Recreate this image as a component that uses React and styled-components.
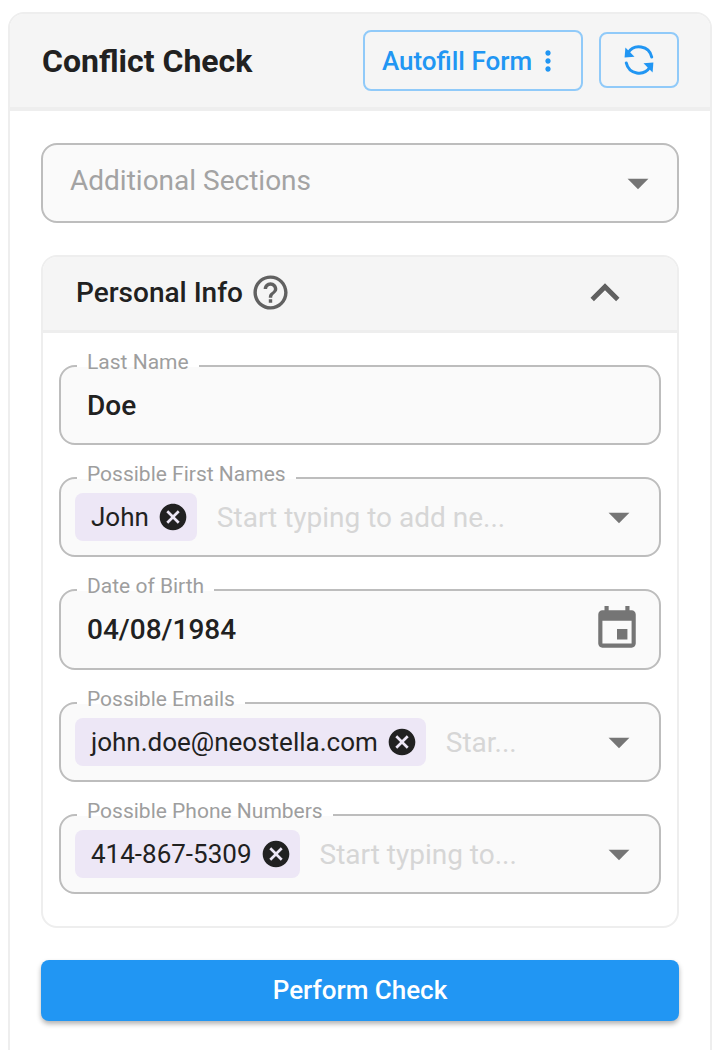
import styled, { createGlobalStyle } from 'styled-components';

const GlobalStyle = createGlobalStyle`
  html, body {
    margin: 0;
    height: 1050px;
    overflow: hidden;
    background: #ffffff;
  }
  body {
    font-family: Roboto, "Liberation Sans", sans-serif;
    color: #212121;
  }
`;

const ICONS = {
  cancel: 'M12 2C6.47 2 2 6.47 2 12s4.47 10 10 10 10-4.47 10-10S17.53 2 12 2zm5 13.59L15.59 17 12 13.41 8.41 17 7 15.59 10.59 12 7 8.41 8.41 7 12 10.59 15.59 7 17 8.41 13.41 12 17 15.59z',
  calendar: 'M17 12h-5v5h5v-5zM16 1v2H8V1H6v2H5c-1.11 0-1.99.9-1.99 2L3 19c0 1.1.89 2 2 2h14c1.1 0 2-.9 2-2V5c0-1.1-.9-2-2-2h-1V1h-2zm3 18H5V8h14v11z',
  help: 'M11 18h2v-2h-2v2zm1-16C6.48 2 2 6.48 2 12s4.48 10 10 10 10-4.48 10-10S17.52 2 12 2zm0 18c-4.41 0-8-3.59-8-8s3.59-8 8-8 8 3.59 8 8-3.59 8-8 8zm0-14c-2.21 0-4 1.79-4 4h2c0-1.1.9-2 2-2s2 .9 2 2c0 2-3 1.75-3 5h2c0-2.25 3-2.5 3-5 0-2.21-1.79-4-4-4z',
  expandLess: 'M12 8l-6 6 1.41 1.41L12 10.83l4.59 4.58L18 14z',
  arrowDown: 'M7 10l5 5 5-5z',
  moreVert: 'M12 8c1.1 0 2-.9 2-2s-.9-2-2-2-2 .9-2 2 .9 2 2 2zm0 2c-1.1 0-2 .9-2 2s.9 2 2 2 2-.9 2-2-.9-2-2-2zm0 6c-1.1 0-2 .9-2 2s.9 2 2 2 2-.9 2-2-.9-2-2-2z',
};

function Icon({ name, size, color }) {
  return (
    <IconSvg viewBox="0 0 24 24" $size={size} fill={color}>
      <path d={ICONS[name]} />
    </IconSvg>
  );
}

function RefreshIcon() {
  return (
    <IconSvg viewBox="0 0 32 32" $size={32} fill="none" stroke="#2196f3" strokeWidth="3">
      <path d="M5 9A13 13 0 0 1 28.7 13" strokeLinecap="round" />
      <path d="M3.3 19A13 13 0 0 0 27 23" strokeLinecap="round" />
      <path d="M2.4 3.5L1.6 13.4l9.9-.6z" fill="#2196f3" stroke="none" />
      <path d="M29.6 28.5l.8-9.9-9.9.6z" fill="#2196f3" stroke="none" />
    </IconSvg>
  );
}

function Field({ label, tall, children }) {
  return (
    <FieldBox $tall={tall}>
      <FieldLabel><span>{label}</span></FieldLabel>
      {children}
    </FieldBox>
  );
}

function TagField({ label, tag, placeholder }) {
  return (
    <Field label={label}>
      <TagRow>
        <Chip>
          {tag}
          <Icon name="cancel" size={32} color="#212121" />
        </Chip>
        <Placeholder>{placeholder}</Placeholder>
        <Icon name="arrowDown" size={50} color="#757575" />
      </TagRow>
    </Field>
  );
}

export default function App() {
  return (
    <>
      <GlobalStyle />
      <Panel>
        <PanelHeader>
          <Title>Conflict Check</Title>
          <AutofillButton>
            Autofill Form
            <Icon name="moreVert" size={32} color="#2196f3" />
          </AutofillButton>
          <RefreshButton>
            <RefreshIcon />
          </RefreshButton>
        </PanelHeader>

        <PanelBody>
          <SectionsSelect>
            <SelectText>Additional Sections</SelectText>
            <Icon name="arrowDown" size={50} color="#757575" />
          </SectionsSelect>

          <Section>
            <SectionHeader>
              <SectionTitle>Personal Info</SectionTitle>
              <Icon name="help" size={41} color="#616161" />
              <Collapse>
                <Icon name="expandLess" size={58} color="#616161" />
              </Collapse>
            </SectionHeader>
            <SectionBody>
              <Field label="Last Name">
                <ValueRow>Doe</ValueRow>
              </Field>
              <TagField label="Possible First Names" tag="John" placeholder="Start typing to add ne..." />
              <Field label="Date of Birth" tall>
                <ValueRow>
                  04/08/1984
                  <Icon name="calendar" size={50} color="#757575" />
                </ValueRow>
              </Field>
              <TagField label="Possible Emails" tag="john.doe@neostella.com" placeholder="Star..." />
              <TagField label="Possible Phone Numbers" tag="414-867-5309" placeholder="Start typing to..." />
            </SectionBody>
          </Section>

          <SubmitButton>Perform Check</SubmitButton>
        </PanelBody>
      </Panel>
    </>
  );
}

const IconSvg = styled.svg`
  display: block;
  flex: none;
  width: ${(props) => props.$size}px;
  height: ${(props) => props.$size}px;
`;

const Panel = styled.div`
  box-sizing: border-box;
  width: 704px;
  height: 1080px;
  margin: 12px 8px 0;
  border: 2px solid #eeeeee;
  border-radius: 16px;
  overflow: hidden;
`;

const PanelHeader = styled.header`
  box-sizing: border-box;
  height: 97px;
  display: flex;
  align-items: center;
  padding: 0 31px 0 32px;
  background: #f5f5f5;
  border-bottom: 4px solid #eeeeee;
`;

const Title = styled.h1`
  flex: 1;
  margin: 0;
  font-size: 32px;
  font-weight: 700;
  color: #212121;
`;

const OutlineButton = styled.button`
  box-sizing: border-box;
  display: flex;
  align-items: center;
  justify-content: center;
  padding: 0;
  background: transparent;
  border: 2px solid #90caf9;
  border-radius: 8px;
  color: #2196f3;
  font-family: inherit;
`;

const AutofillButton = styled(OutlineButton)`
  width: 220px;
  height: 61px;
  font-size: 26px;
  font-weight: 500;
`;

const RefreshButton = styled(OutlineButton)`
  width: 80px;
  height: 56px;
  margin: 0 0 2px 16px;
`;

const PanelBody = styled.div`
  padding: 32px 31px 0;
`;

const SectionsSelect = styled.div`
  box-sizing: border-box;
  height: 80px;
  display: flex;
  align-items: center;
  justify-content: space-between;
  padding: 0 14px 0 27px;
  background: #fafafa;
  border: 2px solid #bdbdbd;
  border-radius: 16px;
  font-size: 28px;
  color: #a3a3a3;
`;

const SelectText = styled.span`
  margin-bottom: 6px;
`;

const Section = styled.section`
  margin-top: 32px;
  border: 2px solid #eeeeee;
  border-radius: 16px;
  overflow: hidden;
`;

const SectionHeader = styled.div`
  box-sizing: border-box;
  height: 76px;
  display: flex;
  align-items: center;
  gap: 7px;
  padding: 0 43px 2px 33px;
  background: #f5f5f5;
  border-bottom: 3px solid #eeeeee;
`;

const SectionTitle = styled.h2`
  margin: 0;
  font-size: 28px;
  font-weight: 500;
  color: #212121;
`;

const Collapse = styled.div`
  margin-left: auto;
`;

const SectionBody = styled.div`
  display: flex;
  flex-direction: column;
  gap: 32px;
  padding: 32px 16px 32px;
`;

const FieldBox = styled.fieldset`
  box-sizing: border-box;
  height: ${(props) => (props.$tall ? '81px' : '80px')};
  min-width: 0;
  margin: 0;
  padding: 0 14px;
  background: #fafafa;
  border: 2px solid #bdbdbd;
  border-radius: 16px;
  background-clip: padding-box;
`;

const FieldLabel = styled.legend`
  height: 2px;
  margin-left: 2px;
  padding: 0 10px;
  font-size: 21px;
  line-height: 2px;
  color: #9e9e9e;

  span {
    position: relative;
    top: -4px;
  }
`;

const ValueRow = styled.div`
  height: 76px;
  display: flex;
  align-items: center;
  justify-content: space-between;
  padding: 0 3px 0 12px;
  font-size: 28px;
  font-weight: 500;
  color: #212121;
`;

const TagRow = styled.div`
  height: 76px;
  display: flex;
  align-items: center;
  padding-right: 1px;
`;

const Chip = styled.div`
  box-sizing: border-box;
  height: 48px;
  display: flex;
  align-items: center;
  gap: 8px;
  flex: none;
  padding: 0 8px 0 16px;
  background: #ede7f6;
  border-radius: 8px;
  font-size: 26px;
  color: #212121;
`;

const Placeholder = styled.span`
  flex: 1;
  min-width: 0;
  margin-left: 20px;
  font-size: 28px;
  color: #d6d6d6;
  white-space: nowrap;
`;

const SubmitButton = styled.button`
  width: 100%;
  height: 61px;
  margin-top: 32px;
  padding: 0 0 2px;
  background: #2196f3;
  border: none;
  border-radius: 8px;
  box-shadow: 0 3px 5px rgba(0, 0, 0, 0.3);
  color: #ffffff;
  font-family: inherit;
  font-size: 26px;
  font-weight: 500;
`;
